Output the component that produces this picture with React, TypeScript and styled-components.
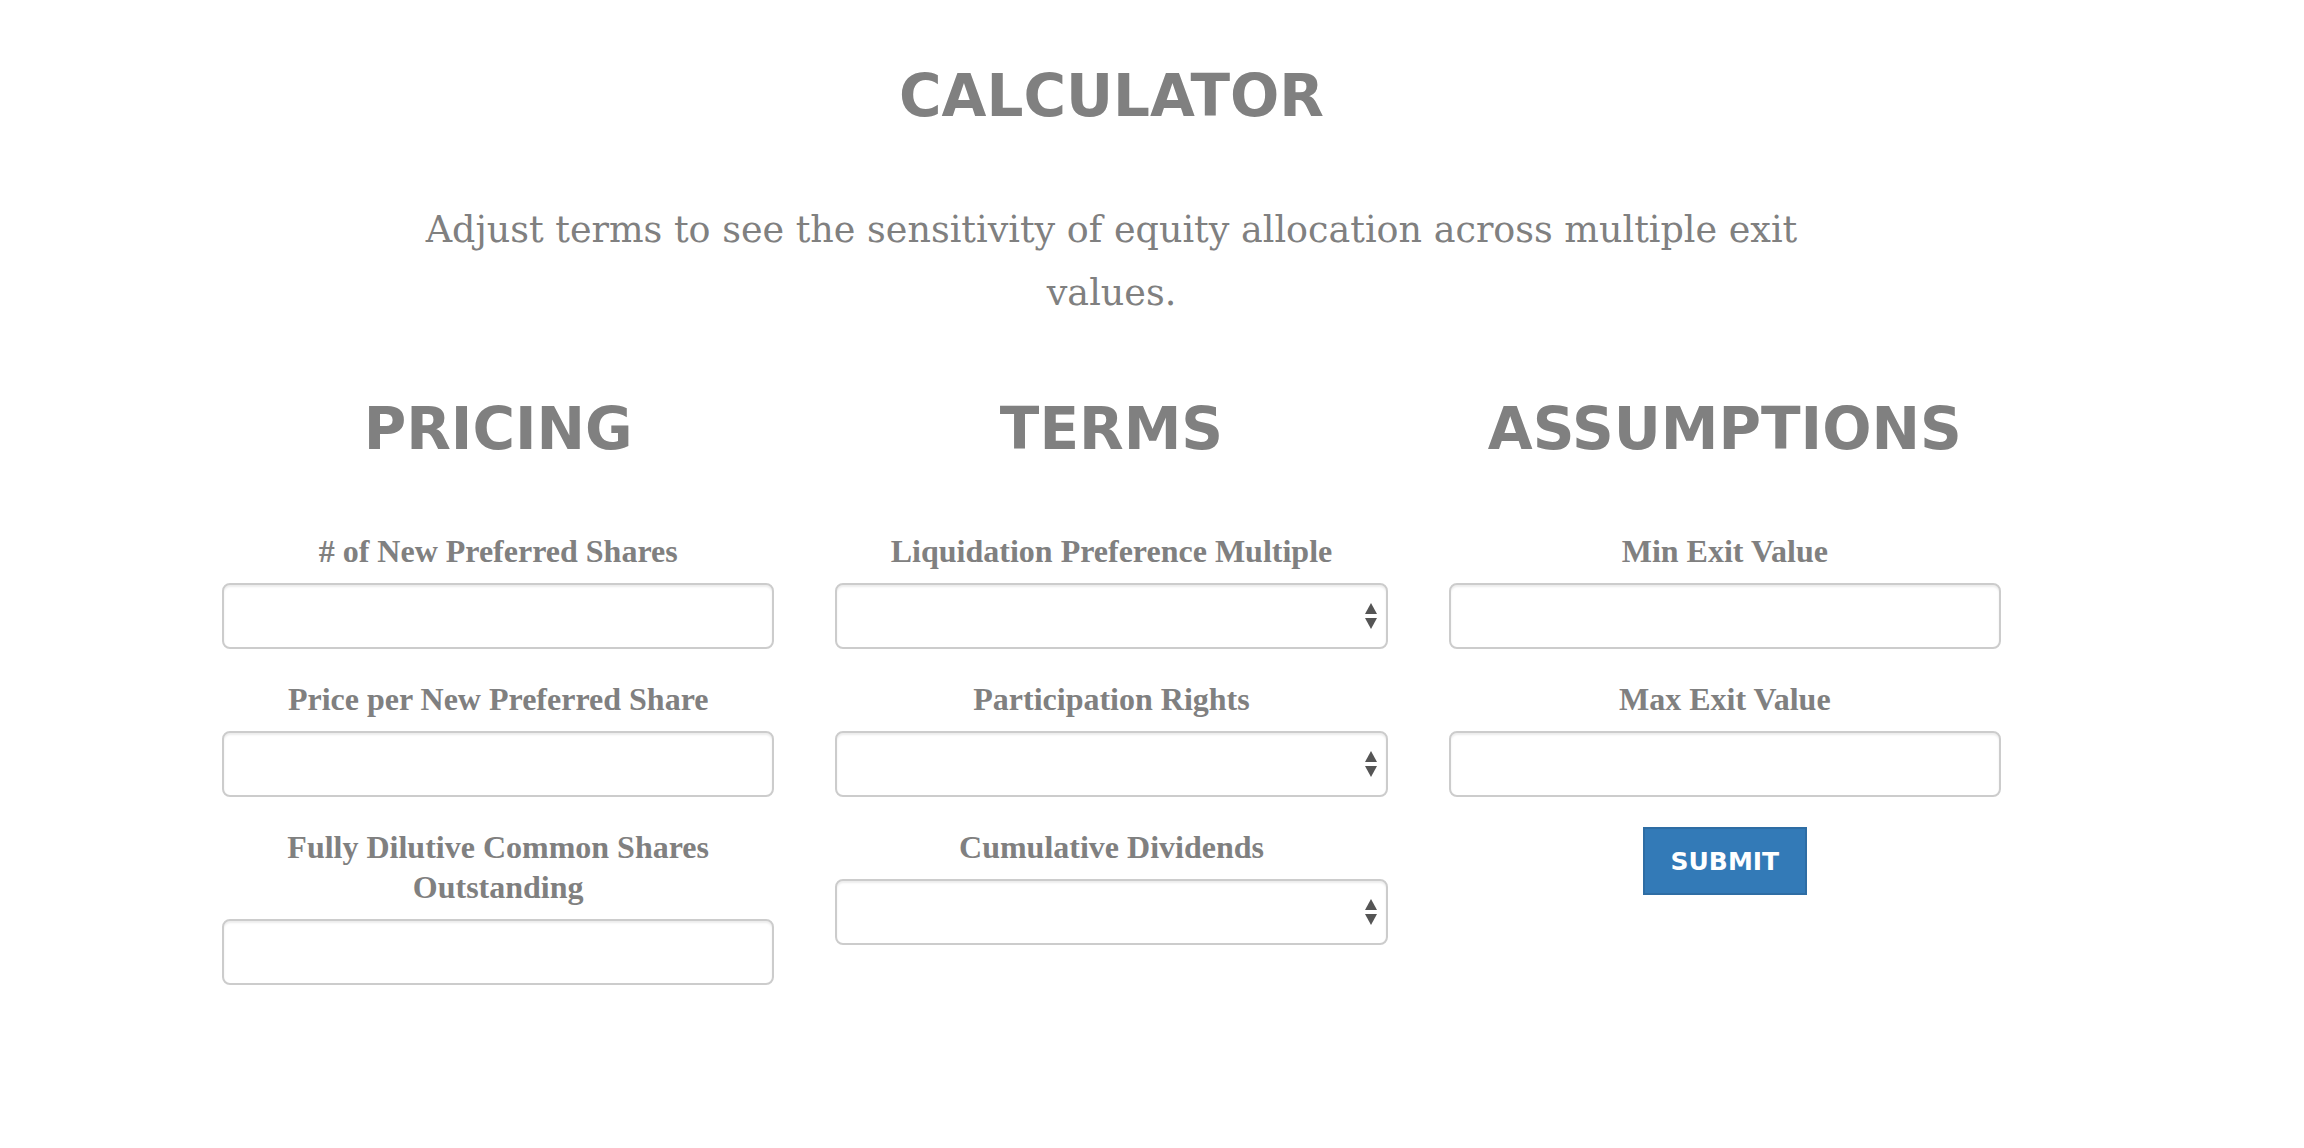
import React from "react";
import styled, { createGlobalStyle } from "styled-components";

const Global = createGlobalStyle`
  html, body { margin: 0; padding: 0; background: #ffffff; }
  body { font-family: "Liberation Serif", serif; color: #808080; }
  * { box-sizing: border-box; }
`;

const Page = styled.main`
  padding: 64px 0 120px 222px;
`;

const Container = styled.div`
  width: 1779px;
  display: flex;
  flex-direction: column;
  align-items: center;
`;

const Title = styled.h1`
  margin: 0;
  font-family: "DejaVu Sans", sans-serif;
  font-weight: 700;
  font-size: 58px;
  line-height: 64px;
  color: #808080;
  text-align: center;
`;

const Lead = styled.p`
  margin: 70px 0 0;
  width: 1420px;
  font-family: "DejaVu Serif", serif;
  font-size: 36.5px;
  line-height: 63px;
  color: #808080;
  text-align: center;
`;

const Columns = styled.div`
  margin-top: 73px;
  width: 100%;
  display: grid;
  grid-template-columns: repeat(3, 1fr);
  column-gap: 61px;
  align-items: start;
`;

const Column = styled.section`
  display: flex;
  flex-direction: column;
  align-items: stretch;
`;

const ColumnTitle = styled.h2`
  margin: 0 0 70px;
  font-family: "DejaVu Sans", sans-serif;
  font-weight: 700;
  font-size: 58px;
  line-height: 64px;
  color: #808080;
  text-align: center;
`;

const Field = styled.div`
  display: flex;
  flex-direction: column;
  margin-bottom: 30px;
`;

const Label = styled.label`
  display: block;
  margin: 0 0 12px;
  padding: 0 16px;
  font-family: "Liberation Serif", serif;
  font-weight: 700;
  font-size: 32px;
  line-height: 40px;
  color: #808080;
  text-align: center;
`;

const Input = styled.input`
  display: block;
  width: 100%;
  height: 66px;
  padding: 0 24px;
  border: 2px solid #cccccc;
  border-radius: 8px;
  background: #ffffff;
  box-shadow: inset 0 2px 2px rgba(0, 0, 0, 0.075);
  font-family: "Liberation Serif", serif;
  font-size: 28px;
  color: #555555;
  outline: none;
`;

const SelectWrap = styled.div`
  position: relative;
  width: 100%;
`;

const Select = styled.select`
  display: block;
  width: 100%;
  height: 66px;
  padding: 0 24px;
  border: 2px solid #cccccc;
  border-radius: 8px;
  background: #ffffff;
  box-shadow: inset 0 2px 2px rgba(0, 0, 0, 0.075);
  appearance: none;
  -webkit-appearance: none;
  font-family: "Liberation Serif", serif;
  font-size: 28px;
  color: #555555;
  outline: none;
`;

const Arrows = styled.svg`
  position: absolute;
  right: 10px;
  top: 50%;
  transform: translateY(-50%);
  pointer-events: none;
`;

const ButtonRow = styled.div`
  display: flex;
  justify-content: center;
`;

const Submit = styled.button`
  height: 68px;
  padding: 0 26px;
  border: 2px solid #2e6da4;
  border-radius: 0;
  background: #337ab7;
  color: #ffffff;
  font-family: "DejaVu Sans", sans-serif;
  font-weight: 700;
  font-size: 25px;
  cursor: pointer;
`;

const SelectArrows = () => (
  <Arrows width="14" height="26" viewBox="0 0 14 26" aria-hidden="true">
    <path d="M7 0 L13 11 L1 11 Z" fill="#555555" />
    <path d="M1 15 L13 15 L7 26 Z" fill="#555555" />
  </Arrows>
);

const TextField = ({ label }: { label: string }) => (
  <Field>
    <Label>{label}</Label>
    <Input type="text" />
  </Field>
);

const SelectField = ({ label }: { label: string }) => (
  <Field>
    <Label>{label}</Label>
    <SelectWrap>
      <Select defaultValue="">
        <option value=""></option>
      </Select>
      <SelectArrows />
    </SelectWrap>
  </Field>
);

export default function App() {
  return (
    <>
      <Global />
      <Page>
        <Container>
          <Title>CALCULATOR</Title>
          <Lead>
            Adjust terms to see the sensitivity of equity allocation across multiple exit values.
          </Lead>
          <Columns>
            <Column>
              <ColumnTitle>PRICING</ColumnTitle>
              <TextField label="# of New Preferred Shares" />
              <TextField label="Price per New Preferred Share" />
              <TextField label="Fully Dilutive Common Shares Outstanding" />
            </Column>
            <Column>
              <ColumnTitle>TERMS</ColumnTitle>
              <SelectField label="Liquidation Preference Multiple" />
              <SelectField label="Participation Rights" />
              <SelectField label="Cumulative Dividends" />
            </Column>
            <Column>
              <ColumnTitle>ASSUMPTIONS</ColumnTitle>
              <TextField label="Min Exit Value" />
              <TextField label="Max Exit Value" />
              <ButtonRow>
                <Submit type="button">SUBMIT</Submit>
              </ButtonRow>
            </Column>
          </Columns>
        </Container>
      </Page>
    </>
  );
}
